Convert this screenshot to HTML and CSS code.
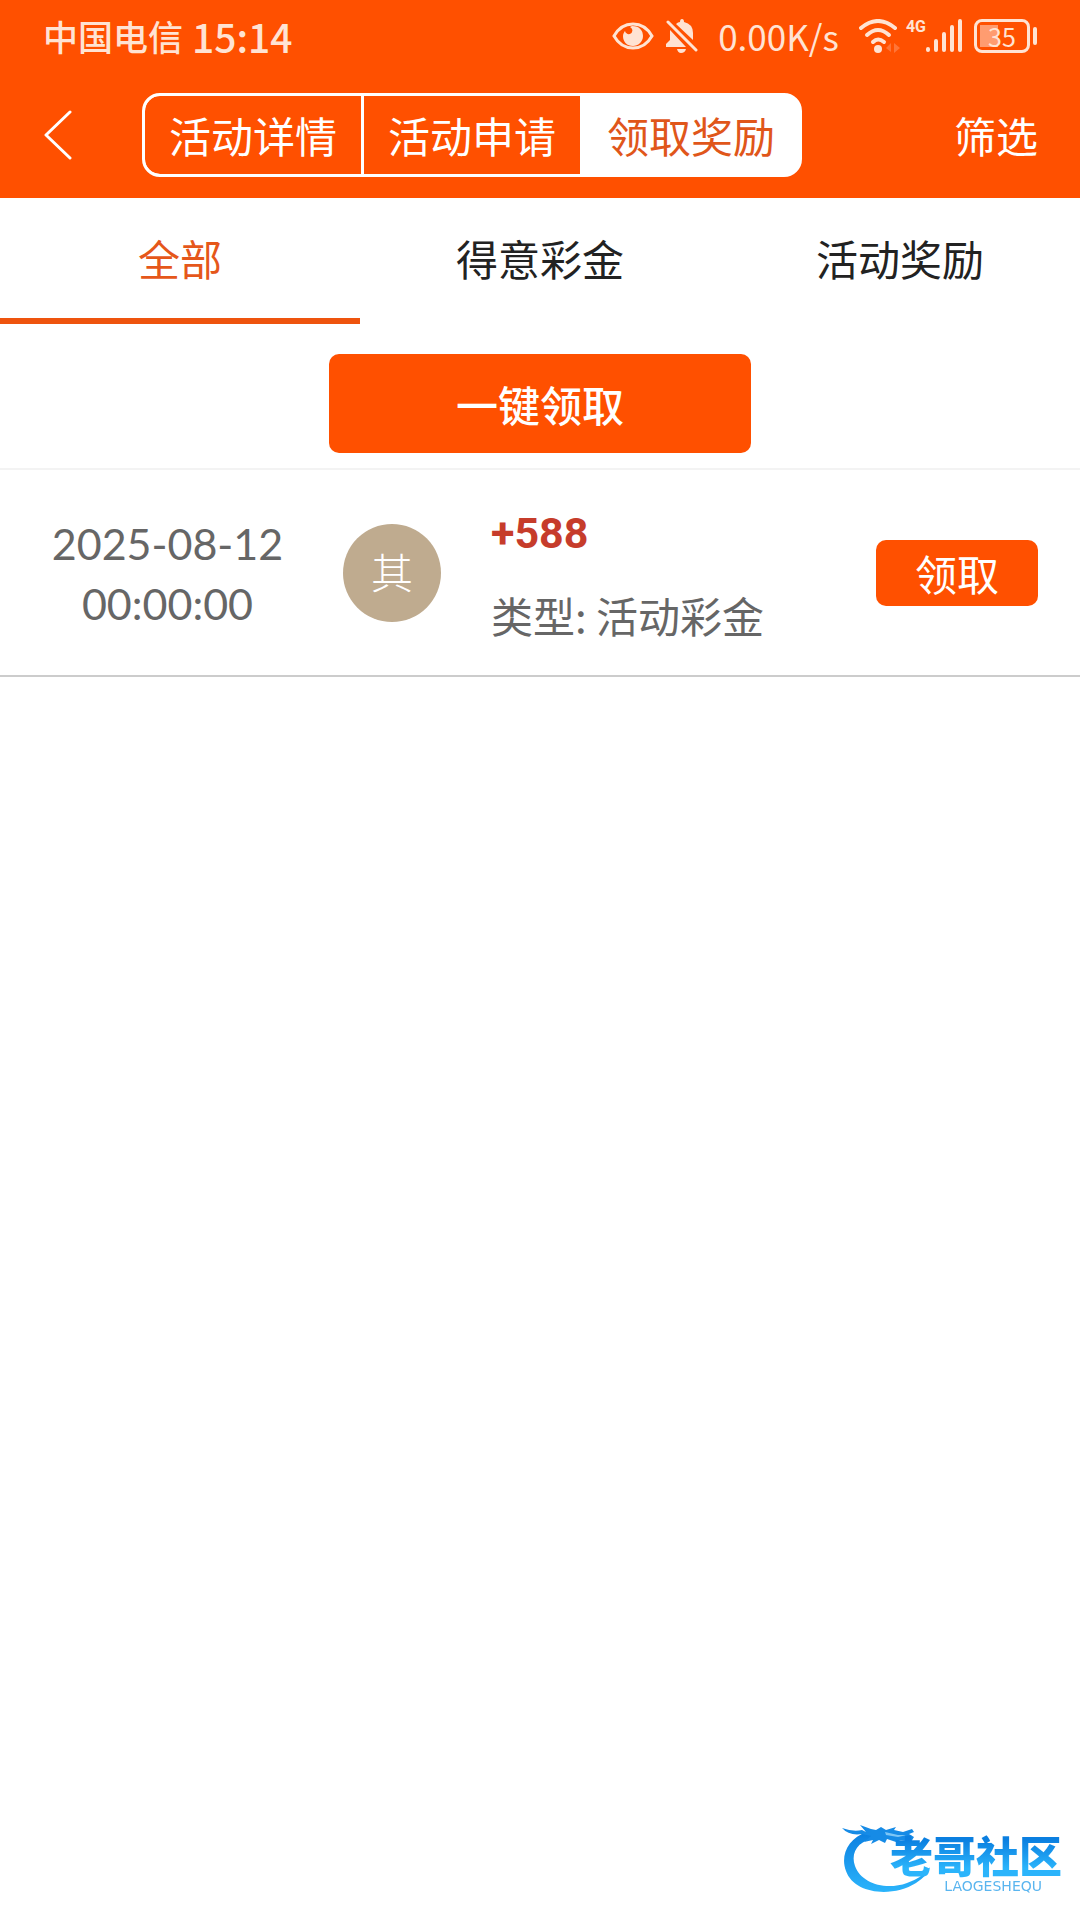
FILE: index.html
```html
<!DOCTYPE html>
<html lang="zh-CN">
<head>
    <meta charset="UTF-8">
    <meta name="viewport" content="width=device-width, initial-scale=1.0">
    <title>领取奖励</title>
    <link rel="stylesheet" href="styles.css">
</head>
<body>
    <header class="header">
        <div class="status">
            <span class="carrier">中国电信</span>
            <span class="clock">15:14</span>
            <div class="status-right">
                <svg class="eye" width="42" height="28" viewBox="0 0 42 28">
                    <path d="M2 14C11-2 31-2 40 14C31 30 11 30 2 14Z" fill="none" stroke="#ffe3d3" stroke-width="3"/>
                    <path d="M20 4C28 4 31 9 31 14C31 20 26 24 21 24C15 24 11 20 11 14C11 12 12 10 13 9C14 13 19 13 20 10C21 8 20 6 18 5Z" fill="#ffe3d3"/>
                </svg>
                <svg class="bell" width="32" height="34" viewBox="0 0 32 34">
                    <path d="M10 5Q12 3 14 3Q14 0 16 0Q18 0 18 3Q27 5 27 14V21ZM4 11L20 28H0V25L4 21ZM11 30H20Q19 34 15 34Q12 34 11 30Z" fill="#ffe3d3"/>
                    <path d="M2 3L30 31" stroke="#ffe3d3" stroke-width="3" stroke-linecap="round"/>
                </svg>
                <span class="speed">0.00K/s</span>
                <svg class="wifi" width="42" height="34" viewBox="0 0 42 34">
                    <g fill="none" stroke="#ffe3d3" stroke-width="4" stroke-linecap="round">
                        <path d="M2 9Q19-5 36 9"/>
                        <path d="M8 16Q19 6 30 16"/>
                        <path d="M14 23Q19 18 25 23"/>
                    </g>
                    <circle cx="19" cy="30" r="4" fill="#ffe3d3"/>
                    <path d="M27 29l5-5v9ZM35 24l6 5l-6 5Z" fill="#ff7538"/>
                </svg>
                <span class="net">4G</span>
                <svg class="signal" width="36" height="34" viewBox="0 0 36 34">
                    <path d="M2 30v1M10 22v9M18 15v16M26 8v23M34 2v29" stroke="#ffe3d3" stroke-width="4" stroke-linecap="round"/>
                </svg>
                <div class="battery">35</div>
                <i class="battery-tip"></i>
            </div>
        </div>
        <nav class="nav">
            <button class="back" type="button" aria-label="返回">
                <svg width="30" height="50" viewBox="0 0 30 50">
                    <path d="M28 2L4 25L28 48" fill="none" stroke="#fff" stroke-width="3" stroke-linecap="round" stroke-linejoin="round"/>
                </svg>
            </button>
            <div class="segment">
                <button type="button">活动详情</button>
                <button type="button">活动申请</button>
                <button type="button" class="active">领取奖励</button>
            </div>
            <button class="filter" type="button">筛选</button>
        </nav>
    </header>

    <div class="tabs">
        <button type="button" class="active">全部</button>
        <button type="button">得意彩金</button>
        <button type="button">活动奖励</button>
    </div>

    <div class="claim-all">
        <button type="button">一键领取</button>
    </div>

    <!-- Lista de premios -->
    <main>
        <div class="reward">
            <time class="date" datetime="2025-08-12T00:00:00">2025-08-12<br>00:00:00</time>
            <div class="avatar">其</div>
            <div class="info">
                <strong class="amount">+588</strong>
                <span class="type">类型: 活动彩金</span>
            </div>
            <button class="claim" type="button">领取</button>
        </div>
    </main>

    <div class="watermark">
        <svg width="92" height="70" viewBox="0 0 92 70">
            <defs>
                <linearGradient id="blue" x1="0" y1="0" x2="0" y2="1">
                    <stop offset="0" stop-color="#0b7fe0"/>
                    <stop offset="1" stop-color="#2bb4fb"/>
                </linearGradient>
            </defs>
            <path d="M25 8C6 14-2 32 4 47C12 70 50 74 74 59Q85 52 88 43Q80 54 65 59C43 67 19 59 13 42C8 28 17 16 34 14Z" fill="url(#blue)"/>
            <path d="M0 4Q11 8 20 6L24 8L18 1L29 5L34 6L39 3L44 6L54 3L52 6L61 8L70 5L72 8L67 10L72 13L69 18L59 16L54 18L45 15L43 19L37 16L29 20L31 16L22 18L29 12L20 10Q7 12 0 4Z" fill="#168be6"/>
            <path d="M43 8L56 11L65 11L56 13L44 11Z" fill="#7dc6f6"/>
        </svg>
        <div class="watermark-text">
            <b>老哥社区</b>
            <small>LAOGESHEQU</small>
        </div>
    </div>
</body>
</html>
```
FILE: styles.css
```css
* {
    box-sizing: border-box;
}

body {
    margin: 0;
    background-color: #fff;
    color: #222;
    font-family: "Noto Sans CJK SC", sans-serif;
    font-size: 42px;
    line-height: 60px;
}

button {
    margin: 0;
    padding: 0;
    border: none;
    background: none;
    color: inherit;
    font: inherit;
    cursor: pointer;
}

svg {
    display: block;
}

.header {
    background-color: #ff5000;
    color: #fff;
}

/* Barra de estado */
.status {
    display: flex;
    align-items: center;
    height: 72px;
    padding: 0 43px;
    color: #ffe3d3;
}

.carrier {
    font-size: 35px;
    font-weight: 500;
}

.clock {
    margin-left: 9px;
    font-size: 39px;
    font-weight: 500;
}

.status-right {
    display: flex;
    align-items: center;
    margin-left: auto;
}

.bell {
    margin-left: 12px;
}

.speed {
    margin-left: 20px;
    font-size: 35px;
}

.wifi {
    margin-left: 20px;
}

.net {
    align-self: flex-start;
    margin-left: 5px;
    font-family: Roboto, sans-serif;
    font-size: 16px;
    font-weight: 700;
    line-height: 42px;
}

.battery {
    width: 56px;
    height: 34px;
    margin-left: 12px;
    border: 3px solid #ffe3d3;
    border-radius: 8px;
    background: linear-gradient(#ff9c70, #ff9c70) 3px 3px / 18px 22px no-repeat;
    font-size: 25px;
    line-height: 28px;
    text-align: center;
}

.battery-tip {
    width: 4px;
    height: 18px;
    margin-left: 3px;
    border-radius: 2px;
    background-color: #ffe3d3;
}

/* Navegación */
.nav {
    display: flex;
    align-items: center;
    height: 126px;
    padding: 0 42px;
}

.segment {
    display: flex;
    margin-left: 70px;
    border: 3px solid #fff;
    border-radius: 18px;
    background-color: #fff;
    overflow: hidden;
}

.segment button {
    height: 78px;
    padding: 0 24px;
    background-color: #ff5000;
}

.segment button:first-child {
    border-radius: 15px 0 0 15px;
}

.segment button + button {
    border-left: 3px solid #fff;
}

.segment .active {
    background-color: #fff;
    color: #e0561a;
}

.filter {
    margin-left: auto;
}

/* Pestañas */
.tabs {
    display: flex;
}

.tabs button {
    flex: 1;
    padding: 30px 0;
    border-bottom: 6px solid transparent;
}

.tabs .active {
    border-color: #ee540e;
    color: #e5571a;
}

.claim-all {
    padding: 30px 0 15px;
    border-bottom: 2px solid #f3f3f3;
}

.claim-all button {
    display: block;
    width: 39%;
    height: 99px;
    margin: 0 auto;
    border-radius: 10px;
    background-color: #ff5000;
    color: #fff;
    font-weight: 500;
}

/* Fila del premio */
.reward {
    display: grid;
    grid-template-columns: 251px 98px 1fr 162px;
    align-items: center;
    column-gap: 50px;
    padding: 30px 42px;
    border-bottom: 2px solid #ccc;
    color: #666;
}

.date {
    padding-top: 3px;
    font-family: Lato, sans-serif;
    font-size: 43px;
    text-align: center;
}

.avatar {
    height: 98px;
    border-radius: 50%;
    background-color: #bfab8f;
    color: #fff;
    font-weight: 300;
    line-height: 94px;
    text-align: center;
}

.info {
    display: flex;
    flex-direction: column;
    gap: 22px;
    padding-top: 3px;
}

.amount {
    color: #c63c2b;
    font-family: Roboto, sans-serif;
    font-size: 43px;
}

.claim {
    height: 66px;
    border-radius: 10px;
    background-color: #ff5000;
    color: #fff;
}

/* Marca de agua */
.watermark {
    position: fixed;
    right: 18px;
    bottom: 26px;
    display: flex;
    align-items: flex-end;
}

.watermark-text {
    display: flex;
    flex-direction: column;
    align-items: flex-end;
    margin-left: -44px;
}

.watermark b {
    background: linear-gradient(#0b7fe0 20%, #2bb4fb 80%);
    background-clip: text;
    -webkit-background-clip: text;
    color: transparent;
    font-size: 43px;
    font-weight: 900;
    line-height: 48px;
}

.watermark small {
    margin-right: 20px;
    color: #5ab5ef;
    font-family: "DejaVu Sans", sans-serif;
    font-size: 14px;
    line-height: 16px;
}
```
